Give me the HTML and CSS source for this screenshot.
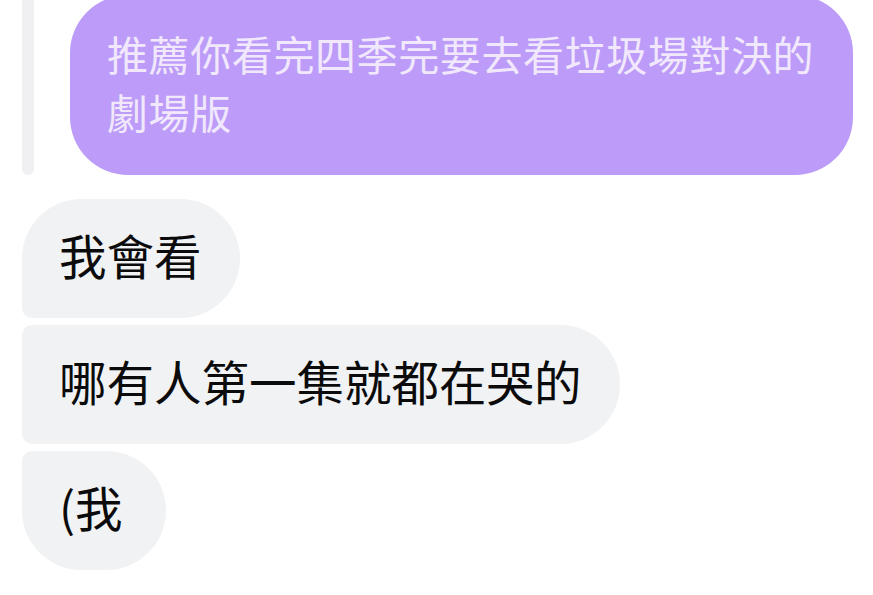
FILE: index.html
```html
<!DOCTYPE html>
<html lang="zh-Hant">
<head>
  <meta charset="UTF-8">
  <meta name="viewport" content="width=device-width, initial-scale=1.0">
  <title>Chat</title>
  <link rel="stylesheet" href="styles.css">
</head>
<body>
  <div class="chat">
    <div class="reply">
      <div class="reply-bar"></div>
      <div class="reply-bubble">推薦你看完四季完要去看垃圾場對決的劇場版</div>
    </div>
    <div class="group">
      <div class="msg first">我會看</div>
      <div class="msg">哪有人第一集就都在哭的</div>
      <div class="msg last">(我</div>
    </div>
  </div>
</body>
</html>
```

FILE: styles.css
```css
body {
  margin: 0;
  padding: 0;
  background-color: #fff;
  font-family: "Noto Sans CJK TC", "Noto Sans", sans-serif;
  overflow: hidden;
}

.chat {
  width: 873px;
  height: 595px;
}

.reply {
  display: flex;
  margin-top: -5px;
  padding-left: 22px;
}

.reply-bar {
  width: 12px;
  flex-shrink: 0;
  background-color: #f0f0f3;
  border-radius: 0 0 6px 6px;
  margin-right: 36px;
}

.reply-bubble {
  width: 710px;
  padding: 29px 36px 35px 37px;
  background-color: #bc9cf8;
  color: #f1e8fd;
  font-size: 41px;
  letter-spacing: 0.6px;
  line-height: 58px;
  border-radius: 58px;
}

.group {
  display: flex;
  flex-direction: column;
  align-items: flex-start;
  gap: 7px;
  margin-top: 24px;
  padding-left: 22px;
}

.msg {
  padding: 26px 38px 34px 37px;
  background-color: #f1f2f4;
  color: #0b0b0c;
  font-size: 47.5px;
  line-height: 59px;
  border-radius: 10px 60px 60px 10px;
}

.msg.first {
  border-top-left-radius: 60px;
}

.msg.last {
  border-bottom-left-radius: 60px;
  padding-right: 43px;
}
```
